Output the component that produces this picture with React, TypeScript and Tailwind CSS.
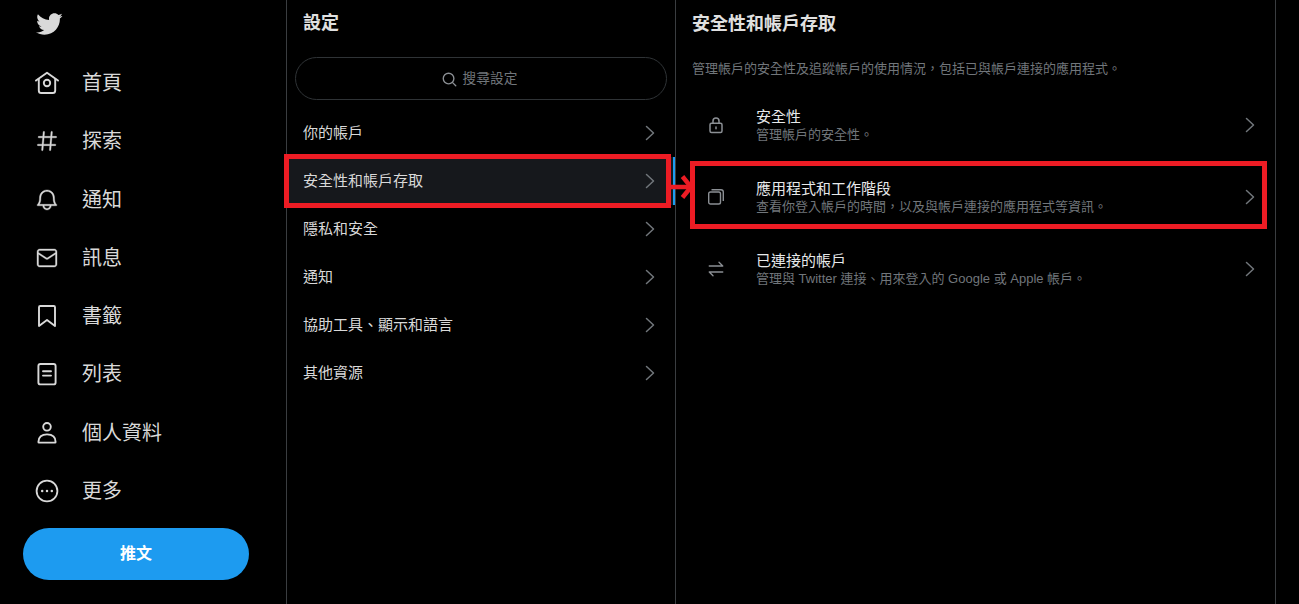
import React from "react";

const FONT = "font-['Liberation_Sans','Noto_Sans_CJK_TC',sans-serif]";

const Ic = ({ d, size = 24 }: { d: string; size?: number }) => (
  <svg viewBox="0 0 24 24" width={size} height={size} fill="#d9d9d9" stroke="#d9d9d9" strokeWidth="0.35"><path d={d} /></svg>
);

const Stroke = ({ children, size = 24, color = "#d9d9d9", w = 1.9 }: { children: React.ReactNode; size?: number; color?: string; w?: number }) => (
  <svg viewBox="0 0 24 24" width={size} height={size} fill="none" stroke={color} strokeWidth={w} strokeLinecap="round" strokeLinejoin="round">{children}</svg>
);

const bird = "M23.643 4.937c-.835.37-1.732.62-2.675.76.962-.576 1.7-1.49 2.048-2.578-.9.534-1.897.922-2.958 1.13-.85-.904-2.06-1.47-3.4-1.47-2.572 0-4.658 2.086-4.658 4.66 0 .364.042.718.12 1.06-3.873-.195-7.304-2.05-9.602-4.868-.4.69-.63 1.49-.63 2.342 0 1.616.823 3.043 2.072 3.878-.764-.025-1.482-.234-2.11-.583v.06c0 2.257 1.605 4.14 3.737 4.568-.392.106-.803.162-1.227.162-.3 0-.593-.028-.877-.082.593 1.85 2.313 3.198 4.352 3.234-1.595 1.25-3.604 1.995-5.786 1.995-.376 0-.747-.022-1.112-.065 2.062 1.323 4.51 2.093 7.14 2.093 8.57 0 13.255-7.098 13.255-13.254 0-.2-.005-.402-.014-.602.91-.658 1.7-1.477 2.323-2.41z";

const nav: { label: string; icon: React.ReactNode }[] = [
  { label: "首頁", icon: <Stroke><path d="M1 9.6 12 1.8l11 7.8" /><path d="M3.8 8v11.4c0 1.6 1 2.6 2.4 2.6h11.6c1.4 0 2.4-1 2.4-2.6V8" /><circle cx="12" cy="12" r="3.2" /></Stroke> },
  { label: "探索", icon: <Ic d="M21 7.337h-3.93l.372-4.272c.036-.412-.27-.775-.682-.812-.417-.03-.776.27-.812.683l-.383 4.4h-6.32l.37-4.27c.037-.413-.27-.776-.68-.813-.42-.03-.777.27-.813.683l-.382 4.4H3.782c-.414 0-.75.337-.75.75s.336.75.75.75H7.61l-.55 6.327H3c-.414 0-.75.336-.75.75s.336.75.75.75h3.93l-.372 4.272c-.036.412.27.775.682.812l.066.003c.385 0 .712-.295.746-.686l.383-4.4h6.32l-.37 4.27c-.036.413.27.776.682.813l.066.003c.385 0 .712-.295.746-.686l.382-4.4h3.957c.413 0 .75-.337.75-.75s-.337-.75-.75-.75H16.39l.55-6.327H21c.414 0 .75-.336.75-.75s-.336-.75-.75-.75zm-6.115 7.826h-6.32l.55-6.326h6.32l-.55 6.326z" /> },
  { label: "通知", icon: <Ic d="M21.697 16.468c-.02-.016-2.14-1.64-2.103-6.03.02-2.532-.812-4.782-2.347-6.335C15.872 2.71 14.01 1.94 12.005 1.93h-.013c-2.004.01-3.866.78-5.242 2.174-1.534 1.553-2.368 3.802-2.346 6.334.037 4.33-2.02 5.967-2.102 6.03-.26.193-.366.53-.265.838.102.308.39.515.712.515h4.92c.102 2.31 1.997 4.16 4.33 4.16s4.226-1.85 4.327-4.16h4.922c.322 0 .61-.206.71-.514.103-.307-.003-.645-.263-.838zM12 20.478c-1.505 0-2.73-1.177-2.828-2.658h5.656c-.1 1.48-1.323 2.66-2.828 2.66zM4.38 16.32c.74-1.132 1.548-3.028 1.524-5.896-.018-2.16.644-3.982 1.913-5.267C8.91 4.05 10.397 3.437 12 3.43c1.603.008 3.087.62 4.18 1.728 1.27 1.285 1.933 3.106 1.915 5.267-.024 2.868.785 4.765 1.525 5.896H4.38z" /> },
  { label: "訊息", icon: <Ic d="M19.25 3.018H4.75C3.233 3.018 2 4.252 2 5.77v12.495c0 1.518 1.233 2.753 2.75 2.753h14.5c1.517 0 2.75-1.235 2.75-2.753V5.77c0-1.518-1.233-2.752-2.75-2.752zm-14.5 1.5h14.5c.69 0 1.25.56 1.25 1.25v.714l-8.05 5.367c-.273.18-.626.182-.9-.002L3.5 6.482v-.714c0-.69.56-1.25 1.25-1.25zm14.5 14.998H4.75c-.69 0-1.25-.56-1.25-1.25V8.24l7.24 4.83c.383.256.822.384 1.26.384.44 0 .877-.128 1.26-.383l7.24-4.83v10.022c0 .69-.56 1.25-1.25 1.25z" /> },
  { label: "書籤", icon: <Stroke><path d="M4 3.2c0-.8.4-1.2 1.2-1.2h13.6c.8 0 1.2.4 1.2 1.2V22l-8-6-8 6z" /></Stroke> },
  { label: "列表", icon: <Stroke><rect x="3.4" y="2" width="17.2" height="20.4" rx="2" /><path d="M8 9.2h8M8 13.6h8" /></Stroke> },
  { label: "個人資料", icon: <Stroke><circle cx="12" cy="5.8" r="3.8" /><path d="M3.4 21c0-5.2 3.4-7.6 8.6-7.6s8.6 2.4 8.6 7.6c0 .4-.2.6-.6.6H4c-.4 0-.6-.2-.6-.6z" /></Stroke> },
  { label: "更多", icon: <svg viewBox="0 0 24 24" width="24" height="24"><circle cx="12" cy="12" r="10.4" fill="none" stroke="#d9d9d9" strokeWidth="1.8" /><circle cx="7.2" cy="12" r="1.25" fill="#d9d9d9" /><circle cx="12" cy="12" r="1.25" fill="#d9d9d9" /><circle cx="16.8" cy="12" r="1.25" fill="#d9d9d9" /></svg> },
];

const Chevron = () => (
  <svg viewBox="0 0 10 16" width="10" height="16" fill="none" stroke="#71767b" strokeWidth="1.5" strokeLinecap="round" strokeLinejoin="round" className="shrink-0"><path d="M1.5 1.5 8.5 8l-7 6.5" /></svg>
);

const menu = ["你的帳戶", "安全性和帳戶存取", "隱私和安全", "通知", "協助工具、顯示和語言", "其他資源"];

const details: { title: string; sub: string; icon: React.ReactNode }[] = [
  { title: "安全性", sub: "管理帳戶的安全性。", icon: <Stroke size={18} color="#8b8f94" w={2}><rect x="4" y="9.5" width="16" height="12.5" rx="2" /><path d="M8 9.5V6.5a4 4 0 0 1 8 0v3" /><path d="M12 14.5v2.5" /></Stroke> },
  { title: "應用程式和工作階段", sub: "查看你登入帳戶的時間，以及與帳戶連接的應用程式等資訊。", icon: <svg viewBox="0 0 16 16" width="16" height="16" fill="none" stroke="#8b8f94" strokeWidth="1.4"><rect x="0.7" y="3" width="11.8" height="12" rx="1.8" /><path d="M3.5 0.8H13c1.4 0 2.3.9 2.3 2.3V12" /></svg> },
  { title: "已連接的帳戶", sub: "管理與 Twitter 連接、用來登入的 Google 或 Apple 帳戶。", icon: <Stroke size={18} color="#8b8f94" w={1.8}><path d="M3 8h18M16 3l5 5M3 16h18M3 16l5 5" /></Stroke> },
];

export default function App() {
  return (
    <div lang="zh-Hant" className={`${FONT} relative flex h-[604px] w-[1299px] overflow-hidden bg-black text-[#d9d9d9]`}>
      <aside className="flex w-[287px] shrink-0 flex-col border-r border-[#3a3d40]">
        <div className="flex h-[54px] items-center pb-[7px] pl-[35px]">
          <svg viewBox="0 0 24 24" width="28" height="28" fill="#d9d9d9"><path d={bird} /></svg>
        </div>
        <nav className="flex flex-col">
          {nav.map((n) => (
            <div key={n.label} className="flex h-[58.25px] items-center">
              <span className="flex w-[81px] justify-center pl-[13px]">{n.icon}</span>
              <span className="ml-[1px] text-[20px] leading-none text-[#d9d9d9]">{n.label}</span>
            </div>
          ))}
        </nav>
        <button className="ml-[23px] mt-[8px] flex h-[52px] w-[226px] items-center justify-center rounded-[26px] bg-[#1d9bf0] text-[16px] font-bold text-white">推文</button>
      </aside>

      <section className="flex w-[389px] shrink-0 flex-col border-r border-[#3a3d40]">
        <h2 className="flex h-[45px] items-center pl-[16px] text-[18px] font-bold leading-none text-[#e0e0e0]">設定</h2>
        <div className="mx-[8px] mt-[12px] flex h-[43px] w-[372px] items-center justify-center gap-[6px] rounded-full border border-[#2f3336] pr-[3px] pt-[1px] text-[13.7px] text-[#71767b]">
          <svg viewBox="0 0 24 24" width="15" height="15" fill="none" stroke="#8b8f94" strokeWidth="2.2" strokeLinecap="round"><circle cx="10.5" cy="10.5" r="8.5" /><path d="m17 17 5 5" /></svg>
          <span>搜尋設定</span>
        </div>
        <div className="mt-[9px] flex flex-col">
          {menu.map((m, i) => (
            <div key={m} className={`relative flex h-[48px] items-center justify-between pl-[16px] pr-[20px] text-[15px] text-[#d9d9d9] ${i === 1 ? "bg-[#16181c]" : ""}`}>
              <span>{m}</span>
              <Chevron />
              {i === 1 && <span className="absolute inset-y-0 right-0 w-[2px] bg-[#1d9bf0]" />}
            </div>
          ))}
        </div>
      </section>

      <section className="flex w-[600px] shrink-0 flex-col border-r border-[#3a3d40]">
        <h2 className="flex h-[47px] items-center pl-[16px] text-[18px] font-bold leading-none text-[#e0e0e0]">安全性和帳戶存取</h2>
        <p className="mt-[13px] pl-[16px] text-[13px] leading-[18px] text-[#71767b]">管理帳戶的安全性及追蹤帳戶的使用情況，包括已與帳戶連接的應用程式。</p>
        <div className="mt-[11px] flex flex-col">
          {details.map((d) => (
            <div key={d.title} className="flex h-[72px] items-center pr-[20px]">
              <span className="flex w-[80px] shrink-0 justify-center">{d.icon}</span>
              <div className="flex flex-1 flex-col pb-[1px]">
                <span className="mb-[1px] text-[15px] leading-[19px] text-[#e7e9ea]">{d.title}</span>
                <span className="text-[13px] leading-[16px] text-[#71767b]">{d.sub}</span>
              </div>
              <Chevron />
            </div>
          ))}
        </div>
      </section>

      <div className="pointer-events-none absolute left-[284px] top-[154px] h-[54px] w-[387px] border-[5px] border-[#ed1c24]" />
      <div className="pointer-events-none absolute left-[690px] top-[161px] h-[68px] w-[577px] border-[5px] border-[#ed1c24]" />
      <svg className="pointer-events-none absolute left-[670px] top-[174px]" width="24" height="28" viewBox="0 0 24 28" fill="none" stroke="#ed1c24" strokeWidth="4.5">
        <path d="M0 13h20" />
        <path d="M12.5 2.5 21 13l-8.5 10.5" />
      </svg>
    </div>
  );
}
